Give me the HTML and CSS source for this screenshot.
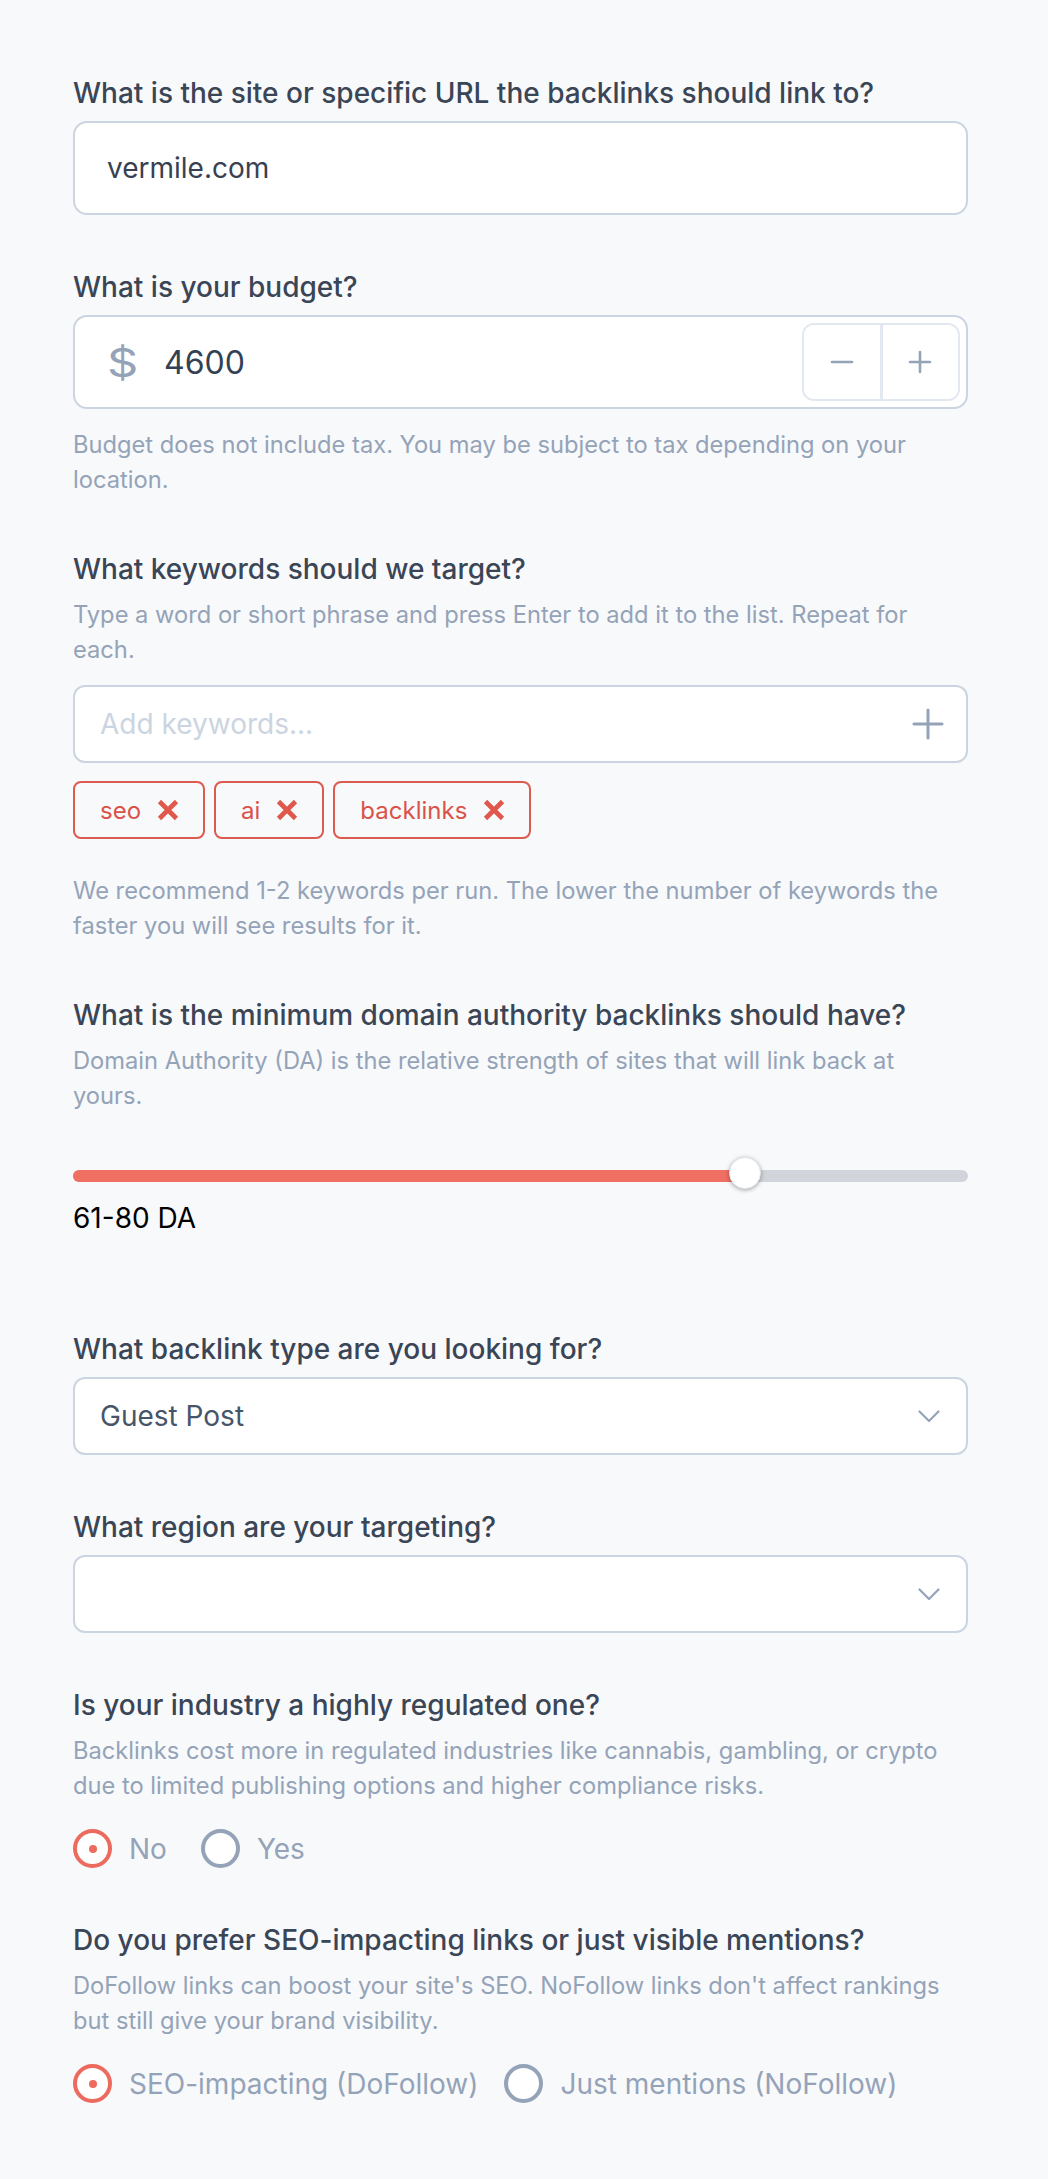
FILE: index.html
```html
<!DOCTYPE html>
<html lang="en">
<head>
<meta charset="utf-8">
<title>Backlink campaign</title>
<link rel="stylesheet" href="styles.css">
</head>
<body>
<form class="form">
  <div class="field">
    <label class="label">What is the site or specific URL the backlinks should link to?</label>
    <div class="text-input"><span class="value">vermile.com</span></div>
  </div>

  <div class="field">
    <label class="label">What is your budget?</label>
    <div class="text-input budget">
      <span class="currency"><span class="currency-glyph">$</span></span>
      <span class="amount">4600</span>
      <div class="stepper">
        <button type="button" class="step">
          <svg width="24" height="24" viewBox="0 0 24 24"><path d="M2 12h20" stroke="#94a3b8" stroke-width="2.6" stroke-linecap="round"/></svg>
        </button>
        <button type="button" class="step">
          <svg width="24" height="24" viewBox="0 0 24 24"><path d="M2 12h20M12 2v20" stroke="#94a3b8" stroke-width="2.6" stroke-linecap="round"/></svg>
        </button>
      </div>
    </div>
    <p class="help help-below">Budget does not include tax. You may be subject to tax depending on your location.</p>
  </div>

  <div class="field">
    <label class="label">What keywords should we target?</label>
    <p class="help">Type a word or short phrase and press Enter to add it to the list. Repeat for each.</p>
    <div class="kw-input">
      <span class="placeholder">Add keywords...</span>
      <svg class="kw-plus" width="32" height="32" viewBox="0 0 32 32"><path d="M2 16h28M16 2v28" stroke="#94a3b8" stroke-width="3" stroke-linecap="round"/></svg>
    </div>
    <div class="tags">
      <span class="tag">seo<svg class="tag-x" width="22" height="22" viewBox="0 0 22 22"><path d="M2.5 2.5l17 17M19.5 2.5l-17 17" stroke="#e0574b" stroke-width="4.6"/></svg></span>
      <span class="tag">ai<svg class="tag-x" width="22" height="22" viewBox="0 0 22 22"><path d="M2.5 2.5l17 17M19.5 2.5l-17 17" stroke="#e0574b" stroke-width="4.6"/></svg></span>
      <span class="tag">backlinks<svg class="tag-x" width="22" height="22" viewBox="0 0 22 22"><path d="M2.5 2.5l17 17M19.5 2.5l-17 17" stroke="#e0574b" stroke-width="4.6"/></svg></span>
    </div>
    <p class="help help-rec">We recommend 1-2 keywords per run. The lower the number of keywords the faster you will see results for it.</p>
  </div>

  <div class="field field-slider">
    <label class="label">What is the minimum domain authority backlinks should have?</label>
    <p class="help">Domain Authority (DA) is the relative strength of sites that will link back at yours.</p>
    <div class="slider">
      <div class="slider-fill" style="width: 75.1%"></div>
      <div class="slider-thumb" style="left: 75.1%"></div>
    </div>
    <div class="slider-value">61-80 DA</div>
  </div>

  <div class="field">
    <label class="label">What backlink type are you looking for?</label>
    <div class="select">
      <span class="select-value">Guest Post</span>
      <svg class="chevron" width="22" height="13" viewBox="0 0 22 13"><path d="M1.5 1.5l9.5 9.5 9.5-9.5" fill="none" stroke="#94a3b8" stroke-width="2.2" stroke-linecap="round" stroke-linejoin="round"/></svg>
    </div>
  </div>

  <div class="field">
    <label class="label">What region are your targeting?</label>
    <div class="select">
      <span class="select-value"></span>
      <svg class="chevron" width="22" height="13" viewBox="0 0 22 13"><path d="M1.5 1.5l9.5 9.5 9.5-9.5" fill="none" stroke="#94a3b8" stroke-width="2.2" stroke-linecap="round" stroke-linejoin="round"/></svg>
    </div>
  </div>

  <div class="field">
    <label class="label">Is your industry a highly regulated one?</label>
    <p class="help">Backlinks cost more in regulated industries like cannabis, gambling, or crypto due to limited publishing options and higher compliance risks.</p>
    <div class="radios radios-short">
      <span class="radio"><span class="circle checked"></span>No</span>
      <span class="radio"><span class="circle"></span>Yes</span>
    </div>
  </div>

  <div class="field">
    <label class="label">Do you prefer SEO-impacting links or just visible mentions?</label>
    <p class="help">DoFollow links can boost your site's SEO. NoFollow links don't affect rankings but still give your brand visibility.</p>
    <div class="radios radios-long">
      <span class="radio"><span class="circle checked"></span>SEO-impacting (DoFollow)</span>
      <span class="radio"><span class="circle"></span>Just mentions (NoFollow)</span>
    </div>
  </div>
</form>
</body>
</html>
```

FILE: styles.css
```css
* { box-sizing: border-box; }

html, body {
  margin: 0;
  padding: 0;
  background: #f8f9fb;
}

body {
  font-family: Inter, "Noto Sans", "Liberation Sans", sans-serif;
  color: #374151;
}

.form {
  width: 895px;
  margin-left: 73px;
  padding-top: 75px;
  padding-bottom: 60px;
}

.field {
  margin-bottom: 54px;
}

.field-slider {
  margin-bottom: 95px;
}

.label {
  display: block;
  font-size: 28px;
  line-height: 36px;
  font-weight: 500;
  color: #3a4556;
  margin-bottom: 10px;
}

.help {
  margin: 0;
  font-size: 23.7px;
  line-height: 35px;
  color: #94a3b8;
}

.help-below { margin-top: 18px; }
.help-rec { margin-top: 34px; }

.text-input {
  height: 94px;
  background: #fff;
  border: 2px solid #cbd5e1;
  border-radius: 14px;
  display: flex;
  align-items: center;
  padding-left: 32px;
  padding-right: 6px;
}

.value {
  font-size: 28px;
  color: #374151;
}

.budget .currency {
  width: 57px;
  display: flex;
  align-items: center;
}

.currency-glyph {
  display: inline-block;
  font-size: 39px;
  line-height: 1;
  color: #94a3b8;
  transform: scaleX(1.25);
  transform-origin: left center;
}

.budget .amount {
  font-size: 32px;
  color: #334155;
  flex: 1;
}

.stepper {
  display: flex;
  height: 78px;
  width: 158px;
  border: 2px solid #e2e8f0;
  border-radius: 12px;
  overflow: hidden;
}

.step {
  flex: 1;
  border: 0;
  background: #fff;
  display: flex;
  align-items: center;
  justify-content: center;
  padding: 0;
}

.step + .step {
  border-left: 3px solid #e2e8f0;
}

.kw-input {
  margin-top: 18px;
  height: 78px;
  background: #fff;
  border: 2px solid #cbd5e1;
  border-radius: 12px;
  display: flex;
  align-items: center;
  justify-content: space-between;
  padding-left: 25px;
  padding-right: 22px;
}

.placeholder {
  font-size: 28px;
  color: #cbd5e1;
}

.tags {
  display: flex;
  gap: 9px;
  margin-top: 18px;
}

.tag {
  height: 58px;
  display: inline-flex;
  align-items: center;
  gap: 16px;
  padding: 0 24px 0 25px;
  border: 2px solid #dc5a4e;
  border-radius: 8px;
  font-size: 24px;
  color: #d9534a;
}

.tag-x { display: block; }

.slider {
  position: relative;
  margin-top: 57px;
  height: 12px;
  border-radius: 6px;
  background: #d1d5db;
}

.slider-fill {
  height: 100%;
  border-radius: 6px;
  background: #ef6f62;
}

.slider-thumb {
  position: absolute;
  top: -13px;
  width: 32px;
  height: 32px;
  margin-left: -16px;
  border-radius: 50%;
  background: #fff;
  border: 1px solid #e5e7eb;
  box-shadow: 0 1px 4px rgba(0, 0, 0, 0.35);
}

.slider-value {
  margin-top: 18px;
  font-size: 28px;
  line-height: 36px;
  color: #000;
}

.select {
  height: 78px;
  background: #fff;
  border: 2px solid #cbd5e1;
  border-radius: 12px;
  display: flex;
  align-items: center;
  justify-content: space-between;
  padding-left: 25px;
  padding-right: 26px;
}

.select-value {
  font-size: 28px;
  color: #475569;
}

.chevron { display: block; }

.radios {
  display: flex;
  margin-top: 26px;
}

.radios-short { gap: 34px; }
.radios-long { gap: 26px; }

.radio {
  display: inline-flex;
  align-items: center;
  gap: 17px;
  font-size: 28px;
  line-height: 38px;
  color: #94a3b8;
}

.circle {
  width: 39px;
  height: 39px;
  border-radius: 50%;
  border: 4px solid #94a3b8;
  background: #fff;
  position: relative;
}

.circle.checked {
  border-color: #ec6a5e;
}

.circle.checked::after {
  content: "";
  position: absolute;
  left: 50%;
  top: 50%;
  width: 8px;
  height: 8px;
  margin: -4px 0 0 -4px;
  border-radius: 50%;
  background: #ec6a5e;
}
```
